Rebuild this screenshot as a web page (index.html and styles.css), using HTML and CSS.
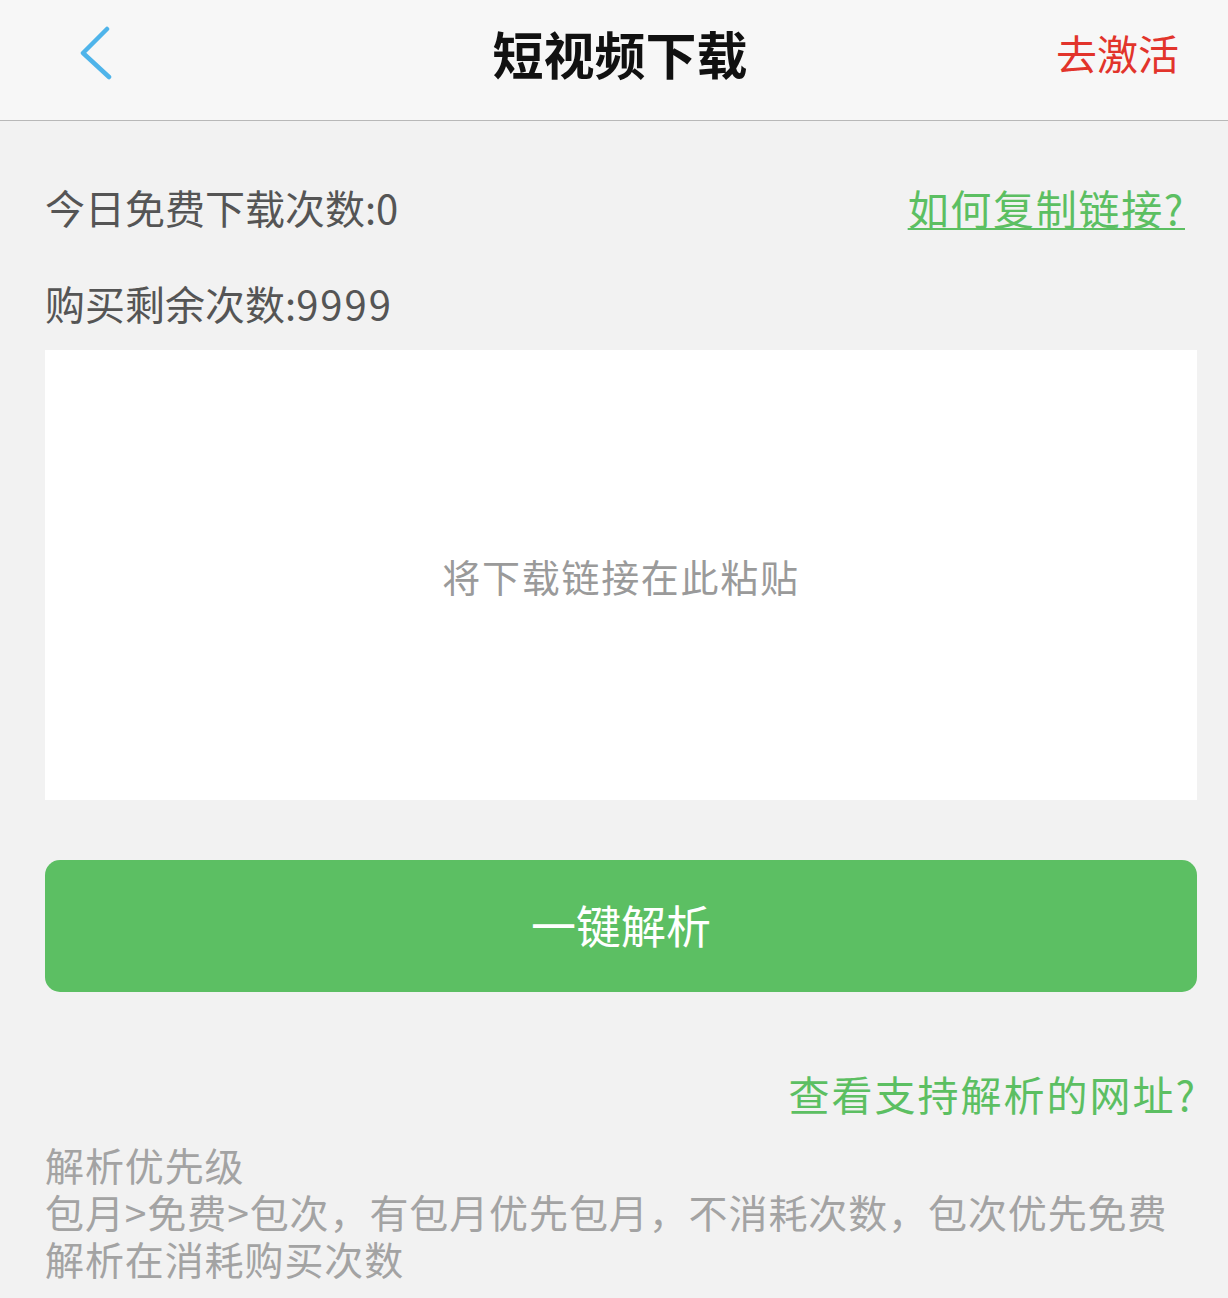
FILE: index.html
```html
<!DOCTYPE html>
<html>
<head>
    <meta charset="utf-8">
    <link rel="stylesheet" href="styles.css">
</head>
<body>
    <div class="nav-bar">
        <a class="nav-back" href="#">
            <svg width="34" height="56" viewBox="0 0 34 56">
                <polyline points="27,4 3,28 29,52" fill="none" stroke="#4fb4ea" stroke-width="4.5" stroke-linecap="round" stroke-linejoin="round"/>
            </svg>
        </a>
        <div class="nav-title">短视频下载</div>
        <a class="nav-action" href="#">去激活</a>
    </div>

    <div class="page">
        <div class="info-row">
            <span class="info-text">今日免费下载次数:0</span>
            <a class="link-green link-underline" href="#">如何复制链接?</a>
        </div>
        <div class="info-row second">
            <span class="info-text">购买剩余次数:<span class="num">9999</span></span>
        </div>

        <textarea class="link-input" placeholder="将下载链接在此粘贴"></textarea>

        <button class="parse-button">一键解析</button>

        <div class="support-row">
            <a class="link-green wide" href="#">查看支持解析的网址?</a>
        </div>

        <div class="priority-note">
            <div>解析优先级</div>
            <div>包月&gt;免费&gt;包次，有包月优先包月，不消耗次数，包次优先免费</div>
            <div>解析在消耗购买次数</div>
        </div>
    </div>
</body>
</html>
```

FILE: styles.css
```css
body {
    margin: 0;
    background-color: #f2f2f2;
    font-family: "Noto Sans CJK SC", "Noto Sans", sans-serif;
}

a {
    text-decoration: none;
}

.nav-bar {
    height: 120px;
    background-color: #f7f7f7;
    border-bottom: 1px solid #b8b8b8;
    display: grid;
    grid-template-columns: 1fr auto 1fr;
    align-items: center;
}

.nav-back {
    display: flex;
    justify-self: start;
    margin-left: 80px;
    margin-top: -14px;
}

.nav-title {
    font-size: 51px;
    font-weight: bold;
    color: #111;
    margin-top: -14px;
    padding-left: 12px;
}

.nav-action {
    justify-self: end;
    font-size: 41px;
    color: #e2342b;
    margin-right: 49px;
    margin-top: -16px;
}

.page {
    padding: 0 31px 0 45px;
}

.info-row {
    display: flex;
    justify-content: space-between;
    align-items: center;
    margin-top: 62px;
    height: 48px;
}

.info-row.second {
    margin-top: 48px;
}

.info-text {
    font-size: 40px;
    color: #555;
    line-height: 48px;
}

.num {
    letter-spacing: 2px;
}

.link-green {
    font-size: 41px;
    color: #5cbf62;
    line-height: 48px;
}

.link-underline {
    letter-spacing: 1.7px;
    text-decoration: underline;
    text-decoration-thickness: 2px;
    text-underline-offset: 3px;
    margin-right: 12px;
}

.link-green.wide {
    letter-spacing: 2px;
}

.link-input {
    display: block;
    box-sizing: border-box;
    width: 100%;
    height: 450px;
    margin-top: 23px;
    border: none;
    outline: none;
    resize: none;
    background-color: #fff;
    font-family: inherit;
    font-size: 38px;
    letter-spacing: 1.7px;
    color: #333;
    text-align: center;
    padding-top: 198px;
}

.link-input::placeholder {
    color: #9a9a9a;
}

.parse-button {
    display: block;
    width: 100%;
    height: 132px;
    margin-top: 60px;
    border: none;
    border-radius: 15px;
    background-color: #5cbf63;
    color: #fff;
    font-family: inherit;
    font-size: 45px;
    padding-bottom: 4px;
}

.support-row {
    display: flex;
    justify-content: flex-end;
    margin-top: 77px;
}

.priority-note {
    margin-top: 24px;
    font-size: 39px;
    line-height: 47px;
    letter-spacing: 0.9px;
    color: #a3a3a3;
}
```
